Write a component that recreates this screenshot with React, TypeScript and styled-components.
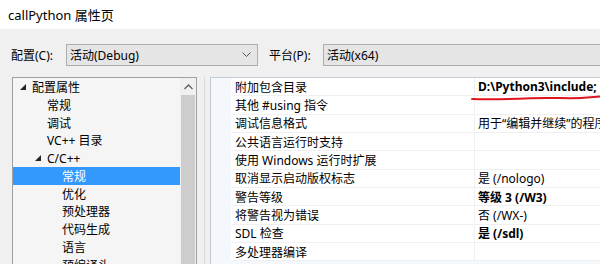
import styled, { createGlobalStyle } from "styled-components";

const GlobalStyle = createGlobalStyle`
  html, body { margin: 0; padding: 0; background: #f0f0f0; }
  body { font-family: "Noto Sans", "Noto Sans CJK SC", sans-serif; font-size: 12px; color: #000; }
`;

const Window = styled.div`
  width: 600px;
  height: 264px;
  overflow: hidden;
  display: flex;
  flex-direction: column;
  background: #f0f0f0;
`;

const TitleBar = styled.div`
  height: 29px;
  flex: none;
  background: #fff;
  display: flex;
  align-items: center;
  padding-left: 8px;
  font-size: 13px;
  color: #000;
`;

const ConfigRow = styled.div`
  height: 22px;
  flex: none;
  margin-top: 15px;
  display: flex;
  align-items: center;
  padding-left: 11px;
`;

const Label = styled.span<{ $w: number }>`
  width: ${(p) => p.$w}px;
  flex: none;
`;

const Combo = styled.div<{ $w?: number }>`
  height: 22px;
  box-sizing: border-box;
  border: 1px solid #adadad;
  background: #e5e5e5;
  display: flex;
  align-items: center;
  padding-left: 3px;
  flex: ${(p) => (p.$w ? "none" : "1")};
  width: ${(p) => (p.$w ? `${p.$w}px` : "auto")};
  margin-right: ${(p) => (p.$w ? "11px" : "-4px")};
`;

const ComboText = styled.span`
  flex: 1;
`;

const Chevron = styled.svg`
  width: 9px;
  height: 6px;
  margin-right: 6px;
`;

const Body = styled.div`
  flex: 1;
  display: flex;
  margin-top: 11px;
  padding-left: 12px;
  min-height: 0;
`;

const TreePanel = styled.div`
  width: 185px;
  flex: none;
  box-sizing: border-box;
  border: 1px solid #a0a0a0;
  border-bottom: none;
  background: #f5f5f5;
  display: flex;
`;

const TreeList = styled.div`
  flex: 1;
  display: flex;
  flex-direction: column;
`;

const TreeRow = styled.div<{ $level: number; $selected?: boolean }>`
  height: 17.8px;
  flex: none;
  display: flex;
  align-items: center;
  padding-left: ${(p) => 7 + p.$level * 15}px;
  background: ${(p) => (p.$selected ? "#3399ff" : "transparent")};
  color: ${(p) => (p.$selected ? "#fff" : "#000")};
  white-space: nowrap;
`;

const Expander = styled.svg`
  width: 6px;
  height: 6px;
  margin-right: 6px;
`;

const Spacer = styled.span`
  width: 12px;
  flex: none;
`;

const ScrollBar = styled.div`
  width: 16px;
  flex: none;
  background: #f0f0f0;
  display: flex;
  flex-direction: column;
`;

const ScrollArrow = styled.div`
  height: 17px;
  display: flex;
  align-items: center;
  justify-content: center;
`;

const ScrollThumb = styled.div`
  flex: 1;
  margin: 0 1px;
  background: #cdcdcd;
`;

const Splitter = styled.div`
  width: 12px;
  flex: none;
  display: flex;
  justify-content: center;
  padding-left: 1px;
`;

const SplitLine = styled.div`
  width: 1px;
  background: #dadada;
`;

const Grid = styled.div`
  flex: 1;
  position: relative;
  box-sizing: border-box;
  border-left: 1px solid #c4cbd6;
  border-top: 1px solid #c4cbd6;
  background: #f4f7fc;
  padding-left: 20px;
`;

const PropRow = styled.div`
  height: 18.33px;
  box-sizing: border-box;
  display: grid;
  grid-template-columns: 243px 1fr;
  background: #fff;
  border-bottom: 1px solid #f0f0f0;
`;

const Cell = styled.div<{ $bold?: boolean; $value?: boolean }>`
  display: flex;
  align-items: center;
  padding-left: ${(p) => (p.$value ? "3px" : "4px")};
  font-weight: ${(p) => (p.$bold ? 700 : 400)};
  border-left: ${(p) => (p.$value ? "1px solid #f0f0f0" : "none")};
  white-space: nowrap;
  overflow: hidden;
`;

const Scribble = styled.svg`
  position: absolute;
  left: 260px;
  top: 17px;
  width: 131px;
  height: 6px;
  pointer-events: none;
`;

const tree: { text: string; level: number; open?: boolean; selected?: boolean }[] = [
  { text: "配置属性", level: 0, open: true },
  { text: "常规", level: 1 },
  { text: "调试", level: 1 },
  { text: "VC++ 目录", level: 1 },
  { text: "C/C++", level: 1, open: true },
  { text: "常规", level: 2, selected: true },
  { text: "优化", level: 2 },
  { text: "预处理器", level: 2 },
  { text: "代码生成", level: 2 },
  { text: "语言", level: 2 },
  { text: "预编译头", level: 2 },
];

const props: { name: string; value?: string; bold?: boolean }[] = [
  { name: "附加包含目录", value: "D:\\Python3\\include;", bold: true },
  { name: "其他 #using 指令" },
  { name: "调试信息格式", value: "用于“编辑并继续”的程序数据库 (/ZI)" },
  { name: "公共语言运行时支持" },
  { name: "使用 Windows 运行时扩展" },
  { name: "取消显示启动版权标志", value: "是 (/nologo)" },
  { name: "警告等级", value: "等级 3 (/W3)", bold: true },
  { name: "将警告视为错误", value: "否 (/WX-)" },
  { name: "SDL 检查", value: "是 (/sdl)", bold: true },
  { name: "多处理器编译" },
];

const DownChevron = () => (
  <Chevron viewBox="0 0 9 6">
    <path d="M0.5 0.5 L4.5 4.5 L8.5 0.5" fill="none" stroke="#555" strokeWidth="1" />
  </Chevron>
);

export default function App() {
  return (
    <>
      <GlobalStyle />
      <Window>
        <TitleBar>callPython 属性页</TitleBar>
        <ConfigRow>
          <Label $w={55}>配置(C):</Label>
          <Combo $w={192}>
            <ComboText>活动(Debug)</ComboText>
            <DownChevron />
          </Combo>
          <Label $w={54}>平台(P):</Label>
          <Combo>
            <ComboText>活动(x64)</ComboText>
          </Combo>
        </ConfigRow>
        <Body>
          <TreePanel>
            <TreeList>
              {tree.map((t, i) => (
                <TreeRow key={i} $level={t.level} $selected={t.selected}>
                  {t.open ? (
                    <Expander viewBox="0 0 6 6">
                      <path d="M6 0 L6 6 L0 6 Z" fill={t.selected ? "#fff" : "#262626"} />
                    </Expander>
                  ) : (
                    <Spacer />
                  )}
                  {t.text}
                </TreeRow>
              ))}
            </TreeList>
            <ScrollBar>
              <ScrollArrow>
                <svg width="9" height="6" viewBox="0 0 9 6">
                  <path d="M0.5 5 L4.5 1 L8.5 5" fill="none" stroke="#606060" strokeWidth="1.3" />
                </svg>
              </ScrollArrow>
              <ScrollThumb />
            </ScrollBar>
          </TreePanel>
          <Splitter>
            <SplitLine />
          </Splitter>
          <Grid>
            {props.map((p, i) => (
              <PropRow key={i}>
                <Cell>{p.name}</Cell>
                <Cell $value $bold={p.bold}>
                  {p.value ?? ""}
                </Cell>
              </PropRow>
            ))}
            <Scribble viewBox="0 0 131 6">
              <path
                d="M1 4 C20 4.5 40 4 60 3.2 C80 2.5 95 3.5 110 3 C118 2.6 125 2 130 1.5"
                fill="none"
                stroke="#e0141e"
                strokeWidth="2"
                strokeLinecap="round"
              />
            </Scribble>
          </Grid>
        </Body>
      </Window>
    </>
  );
}
